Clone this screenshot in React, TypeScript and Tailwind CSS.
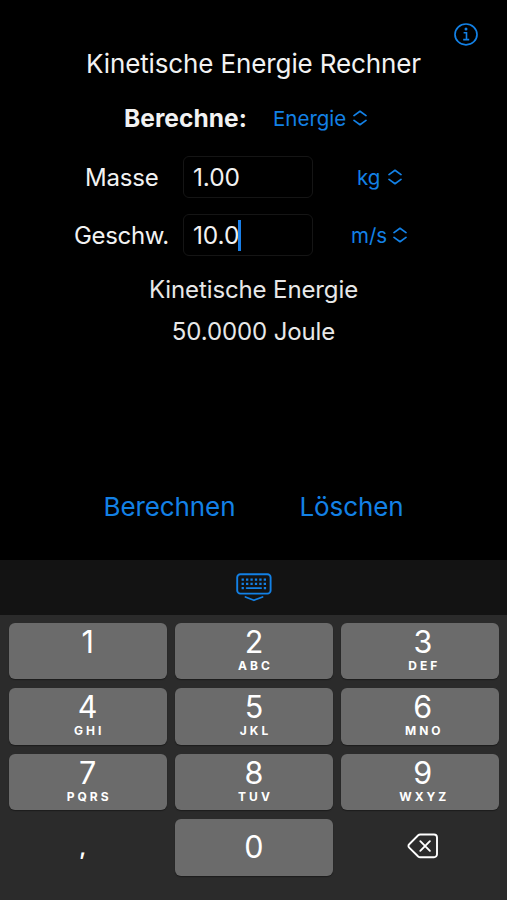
import React, { useState } from 'react';

interface KeyData {
  digit: string;
  letters?: string;
}

interface UnitPickerProps {
  label: string;
  className: string;
}

interface ValueFieldProps {
  value: string;
  active: boolean;
  onSelect: () => void;
}

type Field = 'mass' | 'speed';

const KEYS: KeyData[] = [
  { digit: '1' },
  { digit: '2', letters: 'ABC' },
  { digit: '3', letters: 'DEF' },
  { digit: '4', letters: 'GHI' },
  { digit: '5', letters: 'JKL' },
  { digit: '6', letters: 'MNO' },
  { digit: '7', letters: 'PQRS' },
  { digit: '8', letters: 'TUV' },
  { digit: '9', letters: 'WXYZ' },
];

const InfoIcon = () => (
  <svg width="24" height="24" viewBox="0 0 24 24" fill="none" stroke="currentColor" strokeWidth="1.7">
    <ellipse cx="12" cy="12.4" rx="11" ry="10.4" />
    <circle cx="12" cy="7" r="1.5" fill="currentColor" stroke="none" />
    <path d="M9.6 10.7h2.9v6.6M9.2 17.6h6" strokeWidth="1.6" />
  </svg>
);

const ChevronUpDown = () => (
  <svg width="14" height="16" viewBox="0 0 14 16" fill="none" stroke="currentColor" strokeWidth="1.7" strokeLinecap="round" strokeLinejoin="round">
    <path d="M1 5.6 7 1.3l6 4.3M1 10.4l6 4.3 6-4.3" />
  </svg>
);

const KeyboardDownIcon = () => (
  <svg width="36" height="30" viewBox="0 0 36 30" fill="none" stroke="currentColor" strokeLinecap="round" strokeLinejoin="round">
    <rect x="1.2" y="1.2" width="33.4" height="19.4" rx="3.2" strokeWidth="1.9" />
    <path d="M5.6 6.6h24.4M5.6 10.9h24.4" strokeWidth="2.3" strokeDasharray="2.3 2.12" strokeLinecap="butt" />
    <path d="M5.6 15.1h2.3M27.8 15.1h2.3" strokeWidth="2.3" strokeLinecap="butt" />
    <path d="M10.6 15.1h14.6" strokeWidth="1.7" />
    <path d="m9.4 24 8.5 3.3 8.7-3.3" strokeWidth="1.7" />
  </svg>
);

const DeleteIcon = () => (
  <svg width="32" height="26" viewBox="0 0 32 26" fill="none" stroke="currentColor" strokeWidth="1.9" strokeLinecap="round" strokeLinejoin="round">
    <path d="M13.2 1.5H27a3 3 0 0 1 3 3v16.8a3 3 0 0 1-3 3H13.2a3 3 0 0 1-2-.8L2.2 14.6a2.3 2.3 0 0 1 0-3.4l9-8.9a3 3 0 0 1 2-.8Z" />
    <path d="m13.3 8.2 9.6 9.6m0-9.6-9.6 9.6" />
  </svg>
);

const UnitPicker: React.FC<UnitPickerProps> = ({ label, className }) => (
  <button className={`flex items-center whitespace-nowrap text-[20.5px] text-[#1381e6] ${className}`}>
    <span className="pt-0.5">{label}</span>
    <ChevronUpDown />
  </button>
);

const ValueField: React.FC<ValueFieldProps> = ({ value, active, onSelect }) => (
  <button
    onClick={onSelect}
    className="flex h-[42px] w-[130px] items-center rounded-md border border-[#151515] pl-[9px] text-[24.5px]"
  >
    <span className="pt-px tracking-[-0.1px]">{value}</span>
    {active && <span className="-ml-px h-[31px] w-[3px] bg-[#1a7fe8]" />}
  </button>
);

export default function App() {
  const [values, setValues] = useState({ mass: '1.00', speed: '10.0' });
  const [active, setActive] = useState<Field>('speed');
  const [energy, setEnergy] = useState('50.0000');

  const press = (char: string) => {
    setValues({ ...values, [active]: values[active] + char });
  };

  const handleDelete = () => {
    setValues({ ...values, [active]: values[active].slice(0, -1) });
  };

  const handleCalculate = () => {
    const mass = Number(values.mass.replace(',', '.'));
    const speed = Number(values.speed.replace(',', '.'));
    setEnergy((0.5 * mass * speed * speed).toFixed(4));
  };

  const handleClear = () => {
    setValues({ mass: '', speed: '' });
    setEnergy('0.0000');
  };

  return (
    <div className="flex h-[900px] w-[507px] flex-col overflow-hidden bg-black font-['Inter','Liberation_Sans',sans-serif] text-[#f2f2f2]">
      <main className="flex h-[560px] flex-col">
        <div className="flex justify-end pt-[22px] pr-[29px] text-[#1381e6]">
          <InfoIcon />
        </div>
        <h1 className="h-9 text-center text-[26px] leading-9 tracking-[-0.12px]">Kinetische Energie Rechner</h1>

        <div className="mt-[18px] flex h-9 items-center pl-[124px]">
          <span className="w-[149px] text-[24.5px] font-bold tracking-[0.05px]">Berechne:</span>
          <UnitPicker label="Energie" className="gap-[7px]" />
        </div>

        {/* Eingabefelder */}
        <div className="mt-5 flex items-center">
          <span className="w-[183px] pt-0.5 pl-[85px] text-[24px] tracking-[-0.2px]">Masse</span>
          <ValueField value={values.mass} active={active === 'mass'} onSelect={() => setActive('mass')} />
          <UnitPicker label="kg" className="ml-11 gap-2" />
        </div>
        <div className="mt-4 flex items-center">
          <span className="w-[183px] pt-0.5 pl-[74px] text-[24px] tracking-[-0.35px]">Geschw.</span>
          <ValueField value={values.speed} active={active === 'speed'} onSelect={() => setActive('speed')} />
          <UnitPicker label="m/s" className="ml-[38px] gap-1.5" />
        </div>

        {/* Ergebnis */}
        <div className="mt-[13px] text-center text-[24px] leading-[42px] tracking-[-0.12px] text-[#e8e8e8]">
          <p>Kinetische Energie</p>
          <p>{energy} Joule</p>
        </div>

        <div className="mt-auto mb-[34px] flex h-10 items-center justify-center gap-16 text-[26px] tracking-[-0.1px] text-[#1381e6]">
          <button onClick={handleCalculate}>Berechnen</button>
          <button onClick={handleClear}>Löschen</button>
        </div>
      </main>

      <div className="flex h-[55px] items-center justify-center bg-[#131313] text-[#1381e6]">
        <KeyboardDownIcon />
      </div>

      {/* Ziffernblock */}
      <div className="grid flex-1 auto-rows-[56.5px] grid-cols-3 gap-x-2 gap-y-[9px] bg-[#2b2b2b] pt-[7.5px] pr-[7.5px] pl-[8.5px] text-white">
        {KEYS.map((key) => (
          <button
            key={key.digit}
            onClick={() => press(key.digit)}
            className="flex flex-col items-center rounded-md bg-[#6b6b6b] pt-[3px] shadow-[0_1px_1px_#1c1c1c] nth-[3n]:pl-[5px]"
          >
            <span className="text-[30.5px] leading-8">{key.digit}</span>
            {key.letters && (
              <span className="pl-[3px] text-[12px] leading-[15px] font-bold tracking-[3px]">{key.letters}</span>
            )}
          </button>
        ))}
        <button onClick={() => press(',')} className="pr-2.5 text-[22px] font-semibold">,</button>
        <button
          onClick={() => press('0')}
          className="rounded-md bg-[#6b6b6b] text-[30.5px] leading-8 shadow-[0_1px_1px_#1c1c1c]"
        >
          0
        </button>
        <button onClick={handleDelete} className="flex items-center justify-center pb-0.5 pl-1.5">
          <DeleteIcon />
        </button>
      </div>
    </div>
  );
}
